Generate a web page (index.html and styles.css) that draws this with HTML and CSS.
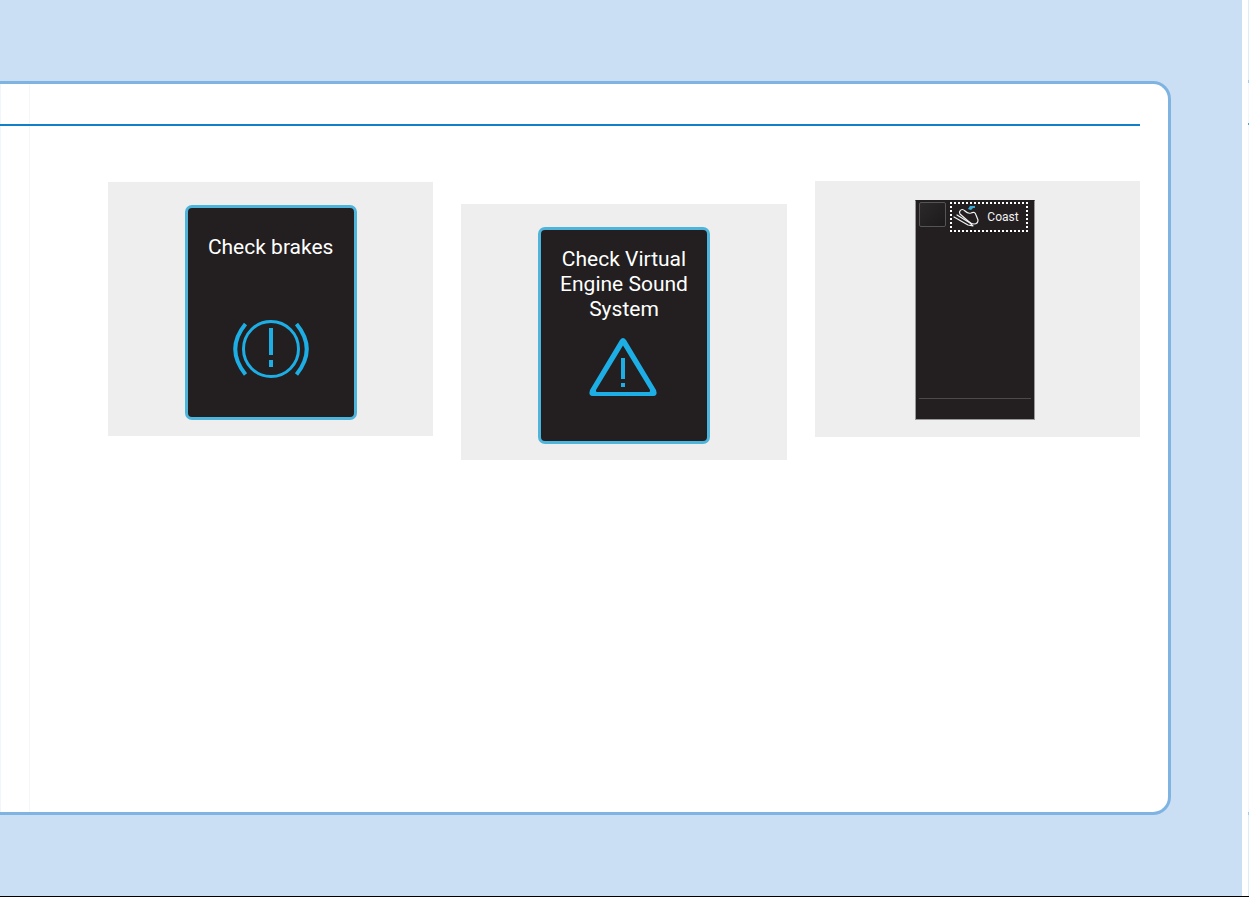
FILE: index.html
```
<!DOCTYPE html>
<html lang="en">
<head>
    <meta charset="UTF-8">
    <meta name="viewport" content="width=device-width, initial-scale=1.0">
    <title>LCD display messages</title>
    <link rel="stylesheet" href="styles.css">
</head>
<body>
    <div class="spread">
        <div class="page">
            <main class="sheet">
                <div class="fold"></div>
                <div class="content">
                    <hr class="rule">
                    <div class="figures">
                        <section class="figure">
                            <div class="display">
                                <p class="message">Check brakes</p>
                                <svg class="brake-icon" viewBox="0 0 80 64" aria-hidden="true">
                                    <g fill="none" stroke="#1caee4">
                                        <circle cx="40" cy="32" r="27.5" stroke-width="3"/>
                                        <path d="M14.500 7 Q-6 32 14.500 57.500M65.500 7 Q86 32 65.500 57.500" stroke-width="4"/>
                                    </g>
                                    <path d="M38 11h4v27h-4zM38 43h4v7h-4z" fill="#1caee4"/>
                                </svg>
                            </div>
                        </section>
                        <section class="figure figure-low">
                            <div class="display display-text">
                                <p class="message">Check Virtual<br>Engine Sound<br>System</p>
                                <svg class="warning-icon" viewBox="0 0 72 64" aria-hidden="true">
                                    <path fill="#1caee4" fill-rule="evenodd" d="M32 4 Q35 0 38 4 L68 54 Q70 60 65 60 H5 Q0 60 2 54 Z M35 9.500 L8 54 Q7.500 56 9 56 H61 Q62.500 56 62 54 Z"/>
                                    <path d="M33 22h4v21h-4zM33 47h4v4h-4z" fill="#1caee4"/>
                                </svg>
                            </div>
                        </section>
                        <section class="figure figure-tall">
                            <div class="cluster">
                                <div class="cluster-top">
                                    <div class="tile"></div>
                                    <div class="coast">
                                        <svg class="foot-icon" viewBox="0 0 28 26" aria-hidden="true">
                                            <g fill="none" stroke="#f2f2f2" stroke-width="1.200" stroke-linecap="round" stroke-linejoin="round">
                                                <path d="M1 13 L15 21 L20 22 L17 19 L4 11"/>
                                                <path d="M7 7 Q9 4 12 7 Q15 10 18 9 Q22 7 23 11 L25 16 Q25 20 21 20 Q18 20 15 17 L7 10 Q6 8 7 7 Z"/>
                                            </g>
                                            <path d="M15 5 L17 2 H22 V4 H20 L18 6 Z" fill="#3aa9d8"/>
                                        </svg>
                                        <span class="coast-label">Coast</span>
                                    </div>
                                </div>
                                <div class="cluster-foot"></div>
                            </div>
                        </section>
                    </div>
                </div>
            </main>
        </div>
        <div class="next-page">
            <div class="next-sheet"></div>
        </div>
    </div>
</body>
</html>
```
FILE: styles.css
```
* {
    box-sizing: border-box;
}

body {
    margin: 0;
    min-height: 100vh;
    display: flex;
    flex-direction: column;
    background-color: #fff;
    font-family: Roboto, "Liberation Sans", sans-serif;
    border-bottom: 1px solid #000;
}

.spread {
    flex: 1;
    display: flex;
}

/* Blue page with the white sheet */
.page {
    flex: 1;
    display: flex;
    padding: 81px 71px 81px 0;
    background-color: #cadff4;
}

.sheet {
    flex: 1;
    display: flex;
    background-color: #fff;
    border: 3px solid #7fb3e2;
    border-left: 0;
    border-radius: 0 18px 18px 0;
}

.fold {
    width: 30px;
    border-left: 1px solid #f1f6fc;
    border-right: 1px solid #f4f6fa;
}

.content {
    flex: 1;
    padding: 40px 28px 28px 0;
}

.rule {
    height: 2px;
    margin: 0 0 0 -30px;
    border: 0;
    background-color: #1180c9;
}

/* Figures */
.figures {
    display: grid;
    grid-template-columns: repeat(3, 1fr);
    align-items: start;
    gap: 28px;
    padding: 55px 0 0 78px;
}

.figure {
    display: flex;
    justify-content: center;
    margin-top: 1px;
    padding: 23px 0 16px;
    background-color: #eee;
}

.figure-low {
    margin-top: 23px;
}

.figure-tall {
    margin-top: 0;
    padding: 19px 4px 17px 0;
}

.display {
    width: 172px;
    height: 215px;
    padding-top: 27px;
    display: flex;
    flex-direction: column;
    align-items: center;
    gap: 57px;
    background-color: #231f20;
    border: 3px solid #4db5dc;
    border-radius: 7px;
}

.display-text {
    height: 217px;
    padding-top: 17px;
    gap: 14px;
}

.message {
    margin: 0;
    color: #fff;
    font-size: 21px;
    line-height: 25px;
    text-align: center;
}

.brake-icon {
    width: 80px;
    height: 64px;
}

.warning-icon {
    width: 72px;
    height: 64px;
}

/* Instrument cluster */
.cluster {
    width: 120px;
    height: 220px;
    padding: 1px 3px 0;
    display: flex;
    flex-direction: column;
    justify-content: space-between;
    background-color: #231f20;
    border: 1px solid #999;
    border-top-color: #231f20;
}

.cluster-top {
    display: flex;
    align-items: flex-start;
    gap: 4px;
}

.tile {
    width: 27px;
    height: 25px;
    background: linear-gradient(135deg, #2c292a, #1d1a1b);
    border: 1px solid #555;
    border-radius: 2px;
}

.coast {
    width: 78px;
    height: 30px;
    padding-left: 1px;
    display: flex;
    align-items: center;
    gap: 6px;
    border: 2px dotted #fff;
}

.foot-icon {
    width: 28px;
    height: 26px;
}

.coast-label {
    color: #f2f2f2;
    font-size: 12px;
    line-height: 16px;
}

.cluster-foot {
    height: 21px;
    border-top: 1px solid #4d4a4b;
}

/* Edge of the following page */
.next-page {
    width: 7px;
    display: flex;
    padding: 80px 0 81px 6px;
    background: linear-gradient(to right, #fff 6px, #dfebf8 6px);
}

.next-sheet {
    flex: 1;
    padding-top: 40px;
    background-color: #f4f6fb;
    border: solid #a3cbee;
    border-width: 3px 0;
}

.next-sheet::before {
    content: "";
    display: block;
    height: 2px;
    background-color: #4aa3dc;
}
```
